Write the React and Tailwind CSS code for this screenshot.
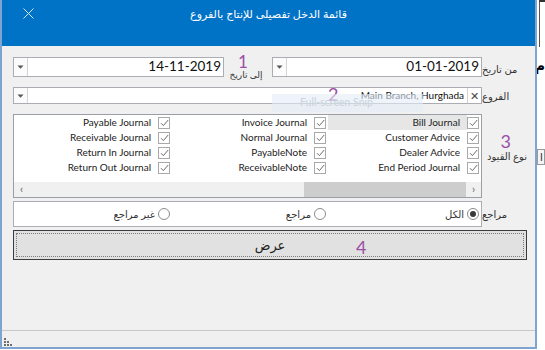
import React from "react";

// annotation numbers drawn over the form
const purple = "text-[#9b4ea5]";

const rows = [
  ["Payable Journal", "Invoice Journal", "Bill Journal"],
  ["Receivable Journal", "Normal Journal", "Customer Advice"],
  ["Return In Journal", "PayableNote", "Dealer Advice"],
  ["Return Out Journal", "ReceivableNote", "End Period Journal"],
];

const Caret = () => (
  <svg width="7" height="4" viewBox="0 0 7 4">
    <path d="M0.5 0.5h6L3.5 3.8z" fill="#555" />
  </svg>
);

const DropButton = () => (
  <div className="w-[14px] shrink-0 flex items-center justify-center border-r border-[#d4d4d4] bg-[#fbfbfb]">
    <Caret />
  </div>
);

const DateBox = ({ value, className }) => (
  <div className={`flex h-[20px] border border-[#abadb3] bg-white ${className}`}>
    <DropButton />
    <div className="flex-1 flex items-center justify-end pr-[2px] text-[13.5px] leading-none text-[#111]">
      {value}
    </div>
  </div>
);

const Check = () => (
  <div className="w-[12px] h-[12px] shrink-0 border border-[#a9a9a9] bg-white flex items-center justify-center">
    <svg width="9" height="8" viewBox="0 0 9 8">
      <path d="M1 4.2l2.4 2.4L8.2 1" stroke="#6b6b6b" strokeWidth="1" fill="none" />
    </svg>
  </div>
);

const Radio = ({ checked }) => (
  <div className="w-[12px] h-[12px] shrink-0 rounded-full border border-[#8c8c8c] bg-white flex items-center justify-center">
    {checked && <div className="w-[6px] h-[6px] rounded-full bg-[#3a3a3a]" />}
  </div>
);

const Label = ({ children, className = "" }) => (
  <div className={`flex-1 flex justify-end text-[10px] text-[#333] ${className}`} dir="rtl">
    {children}
  </div>
);

export default function App() {
  return (
    <div className="w-[545px] h-[350px] bg-white flex overflow-hidden font-['Lato','DejaVu_Sans',sans-serif] text-[#1e1e1e]">
      <div className="w-[537px] h-[349px] shrink-0 flex flex-col border-x-2 border-b-2 border-[#7fa4cf] bg-[#f0f0f0]">
        {/* title bar */}
        <div className="h-[46px] shrink-0 bg-[#0173c7] relative flex justify-center pt-[6px]">
          <svg className="absolute left-[21px] top-[8px]" width="11" height="11" viewBox="0 0 11 11">
            <path d="M0.5 0.5l10 10M10.5 0.5l-10 10" stroke="#d6e6f5" strokeWidth="1" />
          </svg>
          <span className="text-white text-[11px] leading-[16px]" dir="rtl">
            قائمة الدخل تفصيلى للإنتاج بالفروع
          </span>
        </div>

        {/* form */}
        <div className="flex-1 flex flex-col pt-[11px] pl-[11px] pr-[8px]">
          {/* dates */}
          <div className="flex h-[20px]">
            <DateBox value="14-11-2019" className="w-[211px]" />
            <div className="w-[48px] flex flex-col items-center -mt-[2px]">
              <span className={`${purple} text-[17px] leading-[13px] mr-[10px]`}>1</span>
              <span className="text-[9px] leading-[11px] text-[#333] mt-[1px] mr-[4px]" dir="rtl">إلى تاريخ</span>
            </div>
            <DateBox value="01-01-2019" className="w-[210px]" />
            <Label className="items-end">من تاريخ</Label>
          </div>

          {/* branches */}
          <div className="flex h-[17px] mt-[10px]">
            <div className="w-[469px] flex border border-[#abadb3] bg-white relative">
              <DropButton />
              <div className="flex-1 flex items-center justify-end pr-[3px] text-[10px] text-[#111]">
                Main Branch, Hurghada
              </div>
              <div className="w-[14px] shrink-0 flex items-center justify-center border-l border-[#d4d4d4] text-[11px] leading-none text-[#444]">
                ✕
              </div>
              <span className={`absolute left-[314px] -top-[3px] ${purple} text-[18px] leading-none`}>2</span>
              <div className="absolute left-[258px] top-[6px] w-[151px] h-[18px] bg-[#e3ecf6]/60 flex items-center pl-[28px] text-[10.5px] text-[#cbd3db]">
                Full-screen Snip
              </div>
            </div>
            <Label className="items-end">الفروع</Label>
          </div>

          {/* journal types */}
          <div className="flex mt-[10px]">
            <div className="w-[469px] h-[84px] flex flex-col border border-[#9a9ea6] bg-white">
              <div className="grid grid-cols-[158px_156px_1fr]">
                {rows.map((row, i) =>
                  row.map((name, j) => (
                    <div key={name} className="flex items-center h-[15px] pr-[2px]">
                      <div
                        className={`flex-1 h-full flex items-center justify-end pr-[7px] text-[10px] text-[#222] ${
                          i === 0 && j === 2 ? "bg-[#e6e6e6]" : ""
                        }`}
                      >
                        {name}
                      </div>
                      <Check />
                    </div>
                  ))
                )}
              </div>
              <div className="flex-1" />
              <div className="h-[15px] flex bg-[#f0f0f0]">
                <div className="w-[15px] flex items-center justify-center text-[11px] text-[#606060]">‹</div>
                <div className="flex-1 flex justify-end">
                  <div className="w-[162px] bg-[#cdcdcd]" />
                </div>
                <div className="w-[15px] flex items-center justify-center text-[11px] text-[#606060]">›</div>
              </div>
            </div>
            <div className="flex-1 flex flex-col items-end justify-center pb-[18px]">
              <span className={`${purple} text-[18px] leading-[18px] mr-[16px]`}>3</span>
              <span className="text-[10px] leading-[12px] text-[#333]" dir="rtl">نوع القيود</span>
            </div>
          </div>

          {/* reviewed */}
          <div className="flex mt-[3px] h-[26px]">
            <div className="w-[469px] grid grid-cols-[158px_156px_1fr] border border-[#abadb3] bg-white">
              {[
                ["غير مراجع", false],
                ["مراجع", false],
                ["الكل", true],
              ].map(([t, c]) => (
                <div key={t} className="flex items-center justify-end gap-[3px] pr-[2px]">
                  <span className="text-[10px] text-[#333]" dir="rtl">{t}</span>
                  <Radio checked={c} />
                </div>
              ))}
            </div>
            <Label className="items-center">مراجع</Label>
          </div>

          {/* show button */}
          <div className="mt-[3px] h-[30px] border border-[#3c3c3c] bg-[#e1e1e1] p-[2px]">
            <div className="h-full border border-dotted border-[#7a7a7a] flex items-center justify-center relative">
              <span className="text-[13px] text-[#222] mt-[2px]" dir="rtl">عرض</span>
              <span className={`absolute left-[339px] top-[4px] ${purple} text-[18px] leading-none`}>4</span>
            </div>
          </div>
        </div>

        {/* status strip */}
        <div className="h-[17px] shrink-0 border-t border-[#c8c8c8] flex items-end pl-[2px] pb-[1px]">
          <svg width="8" height="8" viewBox="0 0 8 8">
            <rect x="0" y="0" width="2" height="2" fill="#6e6e6e" />
            <rect x="0" y="3" width="2" height="2" fill="#6e6e6e" />
            <rect x="3" y="3" width="2" height="2" fill="#6e6e6e" />
            <rect x="0" y="6" width="2" height="2" fill="#6e6e6e" />
            <rect x="3" y="6" width="2" height="2" fill="#6e6e6e" />
            <rect x="6" y="6" width="2" height="2" fill="#6e6e6e" />
          </svg>
        </div>
      </div>

      {/* window behind */}
      <div className="flex-1 flex flex-col overflow-hidden">
        <div className="h-[47px] ml-[2px] border-l border-t-2 border-[#555] border-t-[#333]" />
        <span className="mt-[12px] text-[14px] font-bold leading-none text-black" dir="rtl">م</span>
        <div className="mt-[76px] h-[16px] border border-[#9a9a9a] bg-[#f4f4f4] pl-[2px] text-[10px] leading-[14px]">ا</div>
      </div>
    </div>
  );
}
